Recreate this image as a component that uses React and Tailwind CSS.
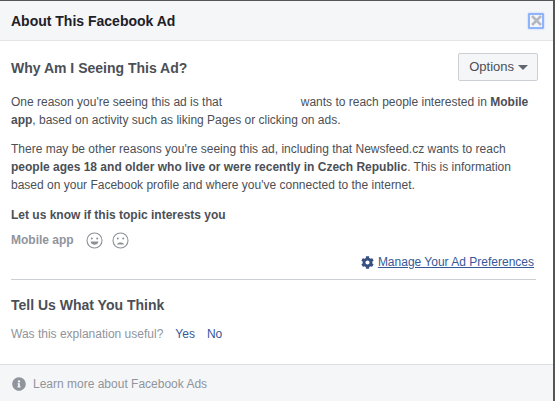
import React from 'react';
import { FaCog, FaInfoCircle } from 'react-icons/fa';

function Face({ sad }) {
  return (
    <svg width="17" height="17" viewBox="0 0 17 17" fill="none" stroke="#8d9096" strokeWidth="1.1">
      <circle cx="8.5" cy="8.5" r="7.5" />
      <circle cx="5.8" cy="6.6" r="1" fill="#8d9096" stroke="none" />
      <circle cx="11.2" cy="6.6" r="1" fill="#8d9096" stroke="none" />
      {sad ? (
        <path d="M5 12.4c1-2.6 6-2.6 7 0z" fill="#8d9096" stroke="none" />
      ) : (
        <path d="M4.6 9.4h7.8c-.4 4.4-7.4 4.4-7.8 0z" fill="#8d9096" stroke="none" />
      )}
    </svg>
  );
}

export default function App() {
  return (
    <div className="w-[555px] h-[401px] overflow-hidden bg-[#555555] text-[12px] leading-[18px] text-[#4b4f56]" style={{ fontFamily: '"Liberation Sans", Arial, sans-serif' }}>
      <div className="w-[553px] h-[401px] mt-px bg-white flex flex-col">
        {/* Header */}
        <div className="h-[40px] shrink-0 flex items-center justify-between pl-[11px] pr-[9px] bg-[#f5f6f7] border-b border-[#e5e5e5]">
          <h1 className="text-[14px] font-bold text-[#1d2129]">About This Facebook Ad</h1>
          <button className="w-[16px] h-[16px] flex items-center justify-center border-2 border-[#8fb4fb] rounded-[1px] shadow-[0_0_2px_#a9c6fd]">
            <svg width="11" height="11" viewBox="0 0 11 11" stroke="#b4b8c2" strokeWidth="2.6">
              <path d="M1 1l9 9M10 1l-9 9" />
            </svg>
          </button>
        </div>

        {/* Body */}
        <div className="flex-1 flex flex-col px-[11px]">
          <div className="flex items-center justify-between mt-[12px] mr-[4px]">
            <h2 className="text-[14px] font-bold pt-[2px]">Why Am I Seeing This Ad?</h2>
            <button className="h-[28px] pl-[10px] pr-[9px] flex items-center gap-[4px] bg-[#f5f6f7] border border-[#ccd0d5] rounded-[2px] text-[13px] text-[#4b4f56]">
              Options
              <span className="w-0 h-0 border-x-[5px] border-x-transparent border-t-[5px] border-t-[#606770] mt-px" />
            </button>
          </div>

          <p className="mt-[12px]">
            One reason you're seeing this ad is that <span className="inline-block w-[72px]" /> wants to reach people interested in <b>Mobile app</b>, based on activity such as liking Pages or clicking on ads.
          </p>
          <p className="mt-[11px]">
            There may be other reasons you're seeing this ad, including that Newsfeed.cz wants to reach <b>people ages 18 and older who live or were recently in Czech Republic</b>. This is information based on your Facebook profile and where you've connected to the internet.
          </p>
          <p className="mt-[12px] font-bold">Let us know if this topic interests you</p>

          <div className="mt-[7px] flex items-center">
            <span className="font-bold text-[#90949c]">Mobile app</span>
            <span className="ml-[12px]"><Face /></span>
            <span className="ml-[9px]"><Face sad /></span>
          </div>

          <div className="mt-[4px] mr-[8px] flex items-center justify-end gap-[4px] text-[#365899]">
            <FaCog size={13} className="text-[#38507f]" />
            <a className="underline">Manage Your Ad Preferences</a>
          </div>

          <div className="mt-[8px] mr-[6px] border-t border-[#ccd0d5]" />

          <h2 className="mt-[16px] text-[14px] font-bold">Tell Us What You Think</h2>
          <div className="mt-[11px] flex">
            <span className="text-[#90949c]">Was this explanation useful?</span>
            <a className="ml-[12px] text-[#365899]">Yes</a>
            <a className="ml-[12px] text-[#365899]">No</a>
          </div>
        </div>

        {/* Footer */}
        <div className="h-[38px] shrink-0 flex items-center gap-[7px] pl-[12px] bg-[#f5f6f7] border-t border-[#dddfe2] text-[#90949c]">
          <FaInfoCircle size={14} className="text-[#90949c]" />
          Learn more about Facebook Ads
        </div>
      </div>
    </div>
  );
}
